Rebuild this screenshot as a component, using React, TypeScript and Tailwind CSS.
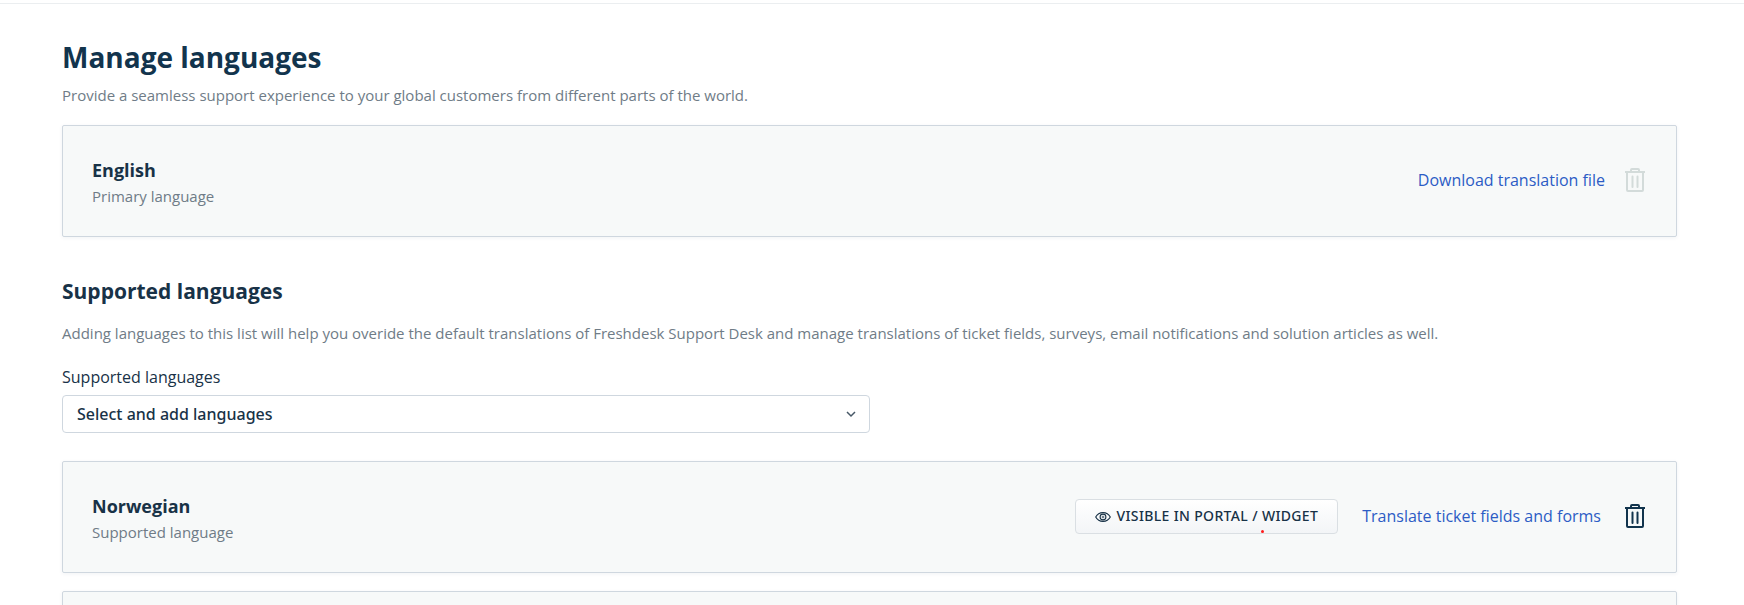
import type { ReactNode } from "react";

interface LanguageCardProps {
  name?: string;
  description?: string;
  children?: ReactNode;
}

function LanguageCard({ name, description, children }: LanguageCardProps) {
  return (
    <div className="flex min-h-28 items-center justify-between rounded-xs border border-[#cfd7df] bg-[#f7f9f9] pr-[31px] pl-[29px] shadow-[0_1px_4px_rgba(18,52,77,0.06)]">
      {name && (
        <div className="pt-1.5">
          <h3 className="text-lg leading-6 font-bold text-[#183247]">{name}</h3>
          <p className="text-[15px] leading-7 text-[#6f7c87]">{description}</p>
        </div>
      )}
      <div className="flex items-center pb-0.5">{children}</div>
    </div>
  );
}

function TrashIcon() {
  return (
    <svg className="h-6 w-5" viewBox="0 0 20 24" fill="none" stroke="currentColor" strokeWidth={2}>
      <path d="M0 4h20" />
      <path d="M6 4V2a1 1 0 0 1 1-1h6a1 1 0 0 1 1 1v2" />
      <path d="M2 4v18a1 1 0 0 0 1 1h14a1 1 0 0 0 1-1V4" />
      <path d="M7.5 8.5v10.5M12.5 8.5v10.5" strokeLinecap="round" />
    </svg>
  );
}

function EyeIcon() {
  return (
    <svg className="h-4 w-4" viewBox="0 0 16 16" fill="none" stroke="currentColor" strokeWidth={1.1}>
      <path d="M0.7 9C2.2 6.2 5 4.6 8 4.6s5.8 1.6 7.3 4.4c-1.5 2.8-4.3 4.4-7.3 4.4S2.2 11.8 0.7 9z" />
      <circle cx="8" cy="9" r="2.9" />
      <circle cx="8" cy="9" r="0.9" strokeWidth={0.7} />
    </svg>
  );
}

export default function App() {
  return (
    <div className="h-screen overflow-hidden bg-white pt-[3px] font-['Open_Sans','Noto_Sans',sans-serif]">
      <main className="border-t border-[#ebeef0] pr-[67px] pl-[62px]">
        <h1 className="pt-8 text-[28px] leading-[42px] font-bold text-[#12344d]">Manage languages</h1>
        <p className="mt-[3px] mb-4 text-[15px] leading-7 text-[#6f7c87]">
          Provide a seamless support experience to your global customers from different parts of the world.
        </p>

        <LanguageCard name="English" description="Primary language">
          <a href="#download" className="text-base leading-6 text-[#2c5cc5]">
            Download translation file
          </a>
          <button type="button" disabled aria-label="Delete English" className="ml-5 text-[#d3dbda]">
            <TrashIcon />
          </button>
        </LanguageCard>

        <h2 className="mt-9 text-[21px] leading-9 font-bold text-[#183247]">Supported languages</h2>
        <p className="mt-[10px] text-[15px] leading-7 text-[#6f7c87]">
          Adding languages to this list will help you overide the default translations of Freshdesk Support Desk and
          manage translations of ticket fields, surveys, email notifications and solution articles as well.
        </p>

        <label htmlFor="languages" className="mt-4 block text-base leading-7 text-[#183247]">
          Supported languages
        </label>
        <div className="relative mt-1 mb-7 w-1/2">
          <select
            id="languages"
            className="block h-[38px] w-full appearance-none rounded border border-[#cfd7df] bg-white px-[14px] font-['Noto_Sans',sans-serif] text-base font-medium text-[#183247]"
          >
            <option>Select and add languages</option>
          </select>
          {/* Arrow */}
          <svg
            className="pointer-events-none absolute top-[14px] right-[14px] h-2.5 w-2.5 text-[#475867]"
            viewBox="0 0 10 10"
            fill="none"
            stroke="currentColor"
            strokeWidth={1.5}
          >
            <path d="M1 3l4 4 4-4" />
          </svg>
        </div>

        <div className="flex flex-col gap-[18px]">
          <LanguageCard name="Norwegian" description="Supported language">
            <button
              type="button"
              className="relative flex h-[35px] items-center gap-1.5 rounded border border-[#dadfe3] bg-linear-to-b from-white to-[#f3f5f7] px-[19px] font-['Noto_Sans',sans-serif] text-sm font-medium tracking-wide text-[#183247]"
            >
              <EyeIcon />
              VISIBLE IN PORTAL / WIDGET
              <span className="absolute right-[73px] bottom-0 h-[3px] w-[3px] rounded-full bg-[#ff1a1a]" />
            </button>
            <a href="#translate" className="ml-6 text-base leading-6 text-[#2c5cc5]">
              Translate ticket fields and forms
            </a>
            <button type="button" aria-label="Delete Norwegian" className="ml-6 text-[#12344d]">
              <TrashIcon />
            </button>
          </LanguageCard>
          <LanguageCard />
        </div>
      </main>
    </div>
  );
}
